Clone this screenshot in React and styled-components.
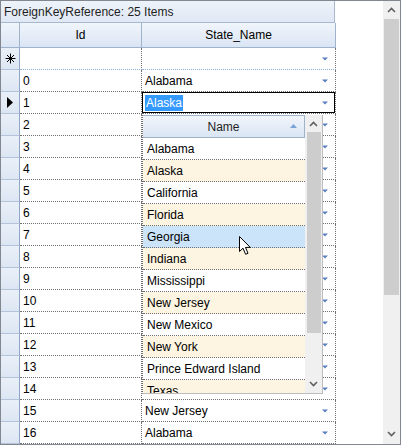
import React from 'react';
import styled, { createGlobalStyle } from 'styled-components';

const GlobalStyle = createGlobalStyle`
  body {
    margin: 0;
    font-family: 'Liberation Sans', Arial, sans-serif;
    font-size: 12px;
    color: #000;
  }
`;

const mainRows = [
  { id: 0, state: 'Alabama' },
  { id: 1, state: 'Alaska', editing: true },
  { id: 2, state: '' },
  { id: 3, state: '' },
  { id: 4, state: '' },
  { id: 5, state: '' },
  { id: 6, state: '' },
  { id: 7, state: '' },
  { id: 8, state: '' },
  { id: 9, state: '' },
  { id: 10, state: '' },
  { id: 11, state: '' },
  { id: 12, state: '' },
  { id: 13, state: '' },
  { id: 14, state: '' },
  { id: 15, state: 'New Jersey' },
  { id: 16, state: 'Alabama' },
];

const popupRows = [
  'Alabama',
  'Alaska',
  'California',
  'Florida',
  'Georgia',
  'Indiana',
  'Mississippi',
  'New Jersey',
  'New Mexico',
  'New York',
  'Prince Edward Island',
  'Texas',
];

const ComboArrow = () => (
  <svg width="6" height="4" viewBox="0 0 6 4">
    <path d="M0 0.5 H6 L3 3.5 Z" fill="#5a7fbf" />
  </svg>
);

const Chevron = ({ down }) => (
  <svg width="9" height="6" viewBox="0 0 9 6">
    <path
      d={down ? 'M1 1 L4.5 4.5 L8 1' : 'M1 5 L4.5 1.5 L8 5'}
      fill="none"
      stroke="#606060"
      strokeWidth="1.6"
    />
  </svg>
);

const Star = () => (
  <svg width="11" height="11" viewBox="0 0 11 11">
    <g stroke="#000" strokeWidth="1">
      <line x1="5.5" y1="0.5" x2="5.5" y2="10.5" />
      <line x1="0.5" y1="5.5" x2="10.5" y2="5.5" />
      <line x1="2" y1="2" x2="9" y2="9" />
      <line x1="9" y1="2" x2="2" y2="9" />
    </g>
  </svg>
);

const Pointer = () => (
  <svg width="7" height="11" viewBox="0 0 7 11">
    <path d="M0 0 L6 5.5 L0 11 Z" fill="#000" />
  </svg>
);

const Cursor = () => (
  <svg width="13" height="20" viewBox="0 0 13 20">
    <path
      d="M0.5 0.5 L0.5 15.5 L4 12.2 L6.6 18.3 L9 17.3 L6.5 11.4 L11.3 11.4 Z"
      fill="#fff"
      stroke="#000"
      strokeWidth="1"
      strokeLinejoin="round"
    />
  </svg>
);

const Frame = styled.div`
  position: relative;
  width: 401px;
  height: 445px;
  box-sizing: border-box;
  border: 1px solid #828790;
  display: flex;
  overflow: hidden;
  background: #fff;
`;

const GridArea = styled.div`
  flex: 1;
  background: #fff;
`;

const Table = styled.div`
  width: 335px;
`;

const TitleBar = styled.div`
  height: 21px;
  border-bottom: 1px solid #a7b9d1;
  border-right: 1px solid #a7b9d1;
  box-sizing: content-box;
  width: 334px;
  background: linear-gradient(#eef3fa, #dfe8f5);
  display: flex;
  align-items: center;
  padding-left: 3px;
  box-sizing: border-box;
  height: 22px;
  color: #1e1e1e;
`;

const Row = styled.div`
  display: flex;
  height: ${p => p.$h}px;
`;

const headerBg = 'linear-gradient(#f1f5fb, #dae5f4)';

const HeadCell = styled.div`
  width: ${p => p.$w}px;
  box-sizing: border-box;
  background: ${headerBg};
  border-right: 1px solid #9fb3cd;
  border-bottom: 1px solid #9fb3cd;
  display: flex;
  align-items: center;
  justify-content: center;
`;

const Indicator = styled.div`
  width: 19px;
  box-sizing: border-box;
  background: linear-gradient(#eaf0f8, #dce6f3);
  border-right: 1px solid #90a6c4;
  border-bottom: 1px solid #b3c4da;
  display: flex;
  align-items: center;
  justify-content: center;
`;

const Cell = styled.div`
  width: ${p => p.$w}px;
  box-sizing: border-box;
  border-right: 1px dotted #707070;
  border-bottom: 1px dotted ${p => (p.$newRow ? '#8fb0da' : '#707070')};
  display: flex;
  align-items: center;
  padding-left: ${p => p.$pl}px;
  white-space: nowrap;
`;

const StateCell = styled(Cell)`
  justify-content: space-between;
  padding-right: 7px;
  box-shadow: ${p => (p.$editing ? 'inset 0 0 0 1px #000' : 'none')};
`;

const Selected = styled.span`
  background: #3399ff;
  color: #fff;
  padding: 1px 1px;
  line-height: 14px;
`;

const ScrollBar = styled.div`
  width: 17px;
  background: #f0f0f0;
  display: flex;
  flex-direction: column;
  align-items: center;
`;

const ArrowBox = styled.div`
  height: ${p => p.$h}px;
  width: 100%;
  display: flex;
  align-items: center;
  justify-content: center;
  flex-shrink: 0;
`;

const Thumb = styled.div`
  width: ${p => p.$w}px;
  height: ${p => p.$h}px;
  background: #cdcdcd;
  flex-shrink: 0;
`;

const Spacer = styled.div`
  flex: 1;
`;

const Popup = styled.div`
  position: absolute;
  left: 141px;
  top: 114px;
  width: 181px;
  height: 279px;
  box-sizing: border-box;
  border-left: 1px dotted #707070;
  border-right: 1px solid #bcbcbc;
  border-bottom: 1px solid #bcbcbc;
  display: flex;
  background: #fff;
  overflow: hidden;
`;

const PopupList = styled.div`
  flex: 1;
  overflow: hidden;
`;

const PopupHead = styled.div`
  position: relative;
  height: 23px;
  box-sizing: border-box;
  background: ${headerBg};
  border: 1px solid #9fb3cd;
  border-left: none;
  display: flex;
  align-items: center;
  justify-content: center;
  color: #1e1e1e;
`;

const SortGlyph = styled.svg`
  position: absolute;
  right: 7px;
  top: 8px;
`;

const PopupItem = styled.div`
  height: 22px;
  flex-shrink: 0;
  box-sizing: border-box;
  border-bottom: 1px dotted #707070;
  background: ${p => (p.$hover ? '#cce4f9' : p.$alt ? '#fdf4e1' : '#fff')};
  display: flex;
  align-items: center;
  padding-left: 4px;
  white-space: nowrap;
`;

const CursorLayer = styled.div`
  position: absolute;
  left: 238px;
  top: 235px;
  line-height: 0;
`;

export default function App() {
  return (
    <>
      <GlobalStyle />
      <Frame>
        <GridArea>
          <Table>
            <TitleBar>ForeignKeyReference: 25 Items</TitleBar>
            <Row $h={25}>
              <HeadCell $w={19} />
              <HeadCell $w={122}>Id</HeadCell>
              <HeadCell $w={194}>State_Name</HeadCell>
            </Row>
            <Row $h={22}>
              <Indicator>
                <Star />
              </Indicator>
              <Cell $w={122} $pl={3} $newRow />
              <StateCell $w={194} $pl={3} $newRow>
                <span />
                <ComboArrow />
              </StateCell>
            </Row>
            {mainRows.map(r => (
              <Row $h={22} key={r.id}>
                <Indicator>{r.editing && <Pointer />}</Indicator>
                <Cell $w={122} $pl={3}>
                  {r.id}
                </Cell>
                <StateCell $w={194} $pl={r.editing ? 3 : 3} $editing={r.editing}>
                  {r.editing ? <Selected>{r.state}</Selected> : <span>{r.state}</span>}
                  <ComboArrow />
                </StateCell>
              </Row>
            ))}
          </Table>
        </GridArea>
        <ScrollBar>
          <ArrowBox $h={18}>
            <Chevron />
          </ArrowBox>
          <Thumb $w={15} $h={276} />
          <Spacer />
          <ArrowBox $h={20}>
            <Chevron down />
          </ArrowBox>
        </ScrollBar>

        <Popup>
          <PopupList>
            <PopupHead>
              Name
              <SortGlyph width="7" height="4" viewBox="0 0 7 4">
                <path d="M0 4 L3.5 0 L7 4 Z" fill="#7aa3d6" />
              </SortGlyph>
            </PopupHead>
            {popupRows.map((name, i) => (
              <PopupItem key={name} $alt={i % 2 === 1} $hover={name === 'Georgia'}>
                {name}
              </PopupItem>
            ))}
          </PopupList>
          <ScrollBar>
            <ArrowBox $h={17}>
              <Chevron />
            </ArrowBox>
            <Thumb $w={14} $h={201} />
            <Spacer />
            <ArrowBox $h={19}>
              <Chevron down />
            </ArrowBox>
          </ScrollBar>
        </Popup>

        <CursorLayer>
          <Cursor />
        </CursorLayer>
      </Frame>
    </>
  );
}
